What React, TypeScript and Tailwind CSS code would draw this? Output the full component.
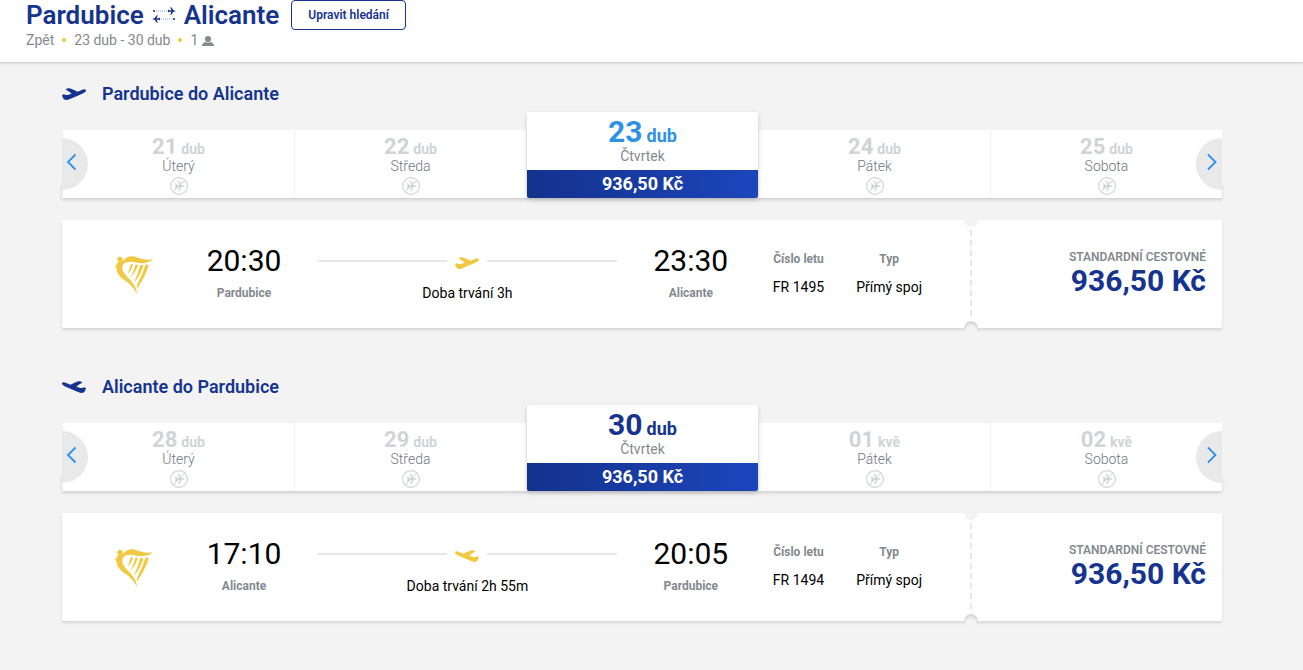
import React from 'react';

interface Day {
  day: string;
  month: string;
  weekday: string;
  price?: string;
}

interface Flight {
  title: string;
  returning?: boolean;
  days: Day[];
  from: string;
  to: string;
  departure: string;
  arrival: string;
  duration: string;
  number: string;
}

const flights: Flight[] = [
  {
    title: 'Pardubice do Alicante',
    days: [
      { day: '21', month: 'dub', weekday: 'Úterý' },
      { day: '22', month: 'dub', weekday: 'Středa' },
      { day: '23', month: 'dub', weekday: 'Čtvrtek', price: '936,50 Kč' },
      { day: '24', month: 'dub', weekday: 'Pátek' },
      { day: '25', month: 'dub', weekday: 'Sobota' },
    ],
    from: 'Pardubice',
    to: 'Alicante',
    departure: '20:30',
    arrival: '23:30',
    duration: '3h',
    number: 'FR 1495',
  },
  {
    title: 'Alicante do Pardubice',
    returning: true,
    days: [
      { day: '28', month: 'dub', weekday: 'Úterý' },
      { day: '29', month: 'dub', weekday: 'Středa' },
      { day: '30', month: 'dub', weekday: 'Čtvrtek', price: '936,50 Kč' },
      { day: '01', month: 'kvě', weekday: 'Pátek' },
      { day: '02', month: 'kvě', weekday: 'Sobota' },
    ],
    from: 'Alicante',
    to: 'Pardubice',
    departure: '17:10',
    arrival: '20:05',
    duration: '2h 55m',
    number: 'FR 1494',
  },
];

function PlaneIcon({ returning, className }: { returning?: boolean; className: string }) {
  return (
    <svg viewBox="0 0 72 36" className={`h-3 w-6 shrink-0 ${className}`} fill="currentColor" aria-hidden="true">
      <path
        transform={returning ? 'translate(72 0) scale(-1 1)' : undefined}
        d="M0 22 L5 19 Q11 22 17 21 L29 17 Q22 10 11 5 Q15 0 23 1 Q34 5 47 11 L59 6 Q68 2 72 6 Q74 11 64 16 Q42 26 22 34 Q12 38 5 33 Q2 29 0 22 Z"
      />
    </svg>
  );
}

function HarpLogo() {
  return (
    <svg viewBox="0 0 114 114" className="h-[38px] w-[38px] text-[#f1c941]" fill="currentColor" aria-hidden="true">
      <circle cx="15" cy="10" r="8" />
      <path d="M24 14 C35 3 46 -1 60 2 C76 6 89 14 114 10 C101 22 83 23 65 20 C46 15 29 17 23 28 C18 43 30 55 44 70 C56 84 65 97 66 114 C58 98 48 87 34 76 C15 64 4 51 5 38 L0 31 L5 26 L8 19 Z" />
      <path d="M47 26 Q52 21 54 26 Q50 42 38 55 Q43 41 47 26 Z" />
      <path d="M61 27 Q67 23 69 28 Q61 50 46 67 Q56 46 61 27 Z" />
      <path d="M76 28 Q82 24 85 29 Q76 58 57 81 Q68 54 76 28 Z" />
      <path d="M91 28 Q98 23 101 28 Q92 61 65 99 Q64 88 70 79 Q83 53 91 28 Z" />
    </svg>
  );
}

function NoFlightIcon() {
  return (
    <svg viewBox="0 0 18 18" className="mx-auto mt-[3px] block h-[18px] w-[18px] text-[#cfd3d6]" aria-hidden="true">
      <circle cx="9" cy="9" r="8.4" fill="none" stroke="currentColor" strokeWidth="1.1" />
      <path fill="currentColor" d="M5 6.5 L6 6.5 L7.4 8.2 L9.5 8.2 L8 4 L9.2 4 L11.6 8.2 L14 8.3 L14.8 9 L14 9.7 L11.6 9.8 L9.2 14 L8 14 L9.5 9.8 L7.4 9.8 L6 11.5 L5 11.5 L5.6 9 Z" />
      <path d="M3.2 14.8 L14.8 3.2" stroke="currentColor" strokeWidth="1" />
    </svg>
  );
}

function RouteIcon() {
  return (
    <svg viewBox="0 0 24 18" className="h-[18px] w-6 text-[#16348f]" fill="currentColor" aria-hidden="true">
      <rect x="1" y="4" width="2" height="2" opacity=".8" />
      <path d="M4 5 H17" stroke="currentColor" strokeWidth="1.2" strokeDasharray="1 1" opacity=".45" />
      <path d="M16 3.6 L17.2 4.2 H19.4 L18.2 1.2 H19.2 L21.6 4.2 L24 5 L21.6 5.8 L19.2 8.8 H18.2 L19.4 5.8 H17.2 L16 6.4 Z" />
      <rect x="21" y="12" width="2" height="2" opacity=".8" />
      <path d="M7 13 H20" stroke="currentColor" strokeWidth="1.2" strokeDasharray="1 1" opacity=".45" />
      <path d="M8 11.6 L6.8 12.2 H4.6 L5.8 9.2 H4.8 L2.4 12.2 L0 13 L2.4 13.8 L4.8 16.8 H5.8 L4.6 13.8 H6.8 L8 14.4 Z" />
    </svg>
  );
}

function ArrowButton({ next }: { next?: boolean }) {
  return (
    <button
      type="button"
      aria-label={next ? 'Další dny' : 'Předchozí dny'}
      className={`absolute bottom-2 flex h-[52px] w-[26px] items-center bg-[#e9e9e9] text-[#2e91e8] ${
        next ? 'right-0 justify-end rounded-l-full pr-1' : 'left-0 rounded-r-full pl-1'
      }`}
    >
      <svg viewBox="0 0 12 20" className="mb-1 h-5 w-3" fill="none" stroke="currentColor" strokeWidth="1.8" aria-hidden="true">
        <path d={next ? 'M2 2.5 L9.5 10 L2 17.5' : 'M9.5 2.5 L2 10 L9.5 17.5'} />
      </svg>
    </button>
  );
}

function DayTab({ item, returning }: { item: Day; returning?: boolean }) {
  if (item.price) {
    return (
      <button type="button" className="relative ml-px flex-1 overflow-hidden rounded-xs bg-white pt-1 text-center shadow-[0_2px_5px_rgba(0,0,0,0.15)]">
        <span className={`flex h-8 items-baseline justify-center gap-1 font-bold ${returning ? 'text-[#16348f]' : 'text-[#2e91e8]'}`}>
          <span className="text-3xl leading-8">{item.day}</span>
          <span className="text-lg leading-none">{item.month}</span>
        </span>
        <span className="block text-sm leading-4 text-[#84898f]">{item.weekday}</span>
        <span className="mt-1.5 block bg-linear-to-r from-[#14318c] to-[#1c46bd] text-lg font-bold leading-7 text-white">{item.price}</span>
      </button>
    );
  }

  return (
    <button type="button" className="flex-1 border-l border-[#f1f1f1] bg-white pt-1.5 pb-[3px] text-center">
      <span className="flex h-[22px] items-baseline justify-center gap-1 font-bold text-[#d0d4d7]">
        <span className="text-[22px] leading-[22px]">{item.day}</span>
        <span className="text-sm leading-none">{item.month}</span>
      </span>
      <span className="block text-sm font-light leading-4 text-[#6f777f]">{item.weekday}</span>
      <NoFlightIcon />
    </button>
  );
}

function TimePoint({ time, city }: { time: string; city: string }) {
  return (
    <div className="w-[76px] shrink-0 text-center">
      <div className="text-3xl leading-9 text-black">{time}</div>
      <div className="mt-1 text-xs font-bold leading-5 text-[#84898f]">{city}</div>
    </div>
  );
}

function Detail({ label, value }: { label: string; value: string }) {
  return (
    <div className="shrink-0 text-center">
      <div className="text-xs font-bold leading-5 text-[#84898f]">{label}</div>
      <div className="mt-2 text-sm leading-5 text-black">{value}</div>
    </div>
  );
}

function Ticket({ flight }: { flight: Flight }) {
  return (
    <div className="mt-[22px] flex h-[108px] rounded-xs bg-white shadow-[0_2px_3px_rgba(0,0,0,0.12)]">
      <div className="flex flex-1 items-center pr-[42px] pb-0.5">
        <div className="flex w-36 shrink-0 justify-center pt-1">
          <HarpLogo />
        </div>
        <TimePoint time={flight.departure} city={flight.from} />
        <div className="mx-9 flex-1 text-center">
          <div className="flex h-9 items-center gap-2">
            <span className="h-0.5 flex-1 bg-[#e7e7e7]" />
            <PlaneIcon returning={flight.returning} className="mt-1 text-[#f1c941]" />
            <span className="h-0.5 flex-1 bg-[#e7e7e7]" />
          </div>
          <div className="mt-1 text-sm leading-5 text-black">Doba trvání {flight.duration}</div>
        </div>
        <TimePoint time={flight.arrival} city={flight.to} />
        <div className="ml-11 flex gap-8">
          <Detail label="Číslo letu" value={flight.number} />
          <Detail label="Typ" value="Přímý spoj" />
        </div>
      </div>
      <div className="relative -mb-1 flex w-3.5 justify-center overflow-hidden pt-2.5 pb-3.5">
        <span className="absolute -top-[7px] h-3.5 w-3.5 rounded-full bg-[#f3f3f3]" />
        <span className="w-0.5 bg-[repeating-linear-gradient(to_bottom,#e7e7e7_0px,#e7e7e7_6px,transparent_6px,transparent_10px)]" />
        <span className="absolute -bottom-[3px] h-3.5 w-3.5 rounded-full bg-[#f3f3f3] shadow-[inset_0_3px_3px_rgba(0,0,0,0.12)]" />
      </div>
      <div className="flex w-[244px] flex-col justify-center pr-4 pb-0.5 text-right">
        <div className="text-xs font-semibold leading-4 text-[#84898f]">STANDARDNÍ CESTOVNÉ</div>
        <div className="text-3xl font-bold leading-8 text-[#16348f]">936,50 Kč</div>
      </div>
    </div>
  );
}

export default function App() {
  return (
    <div className="min-h-screen bg-[#f3f3f3] font-['Roboto',sans-serif]">
      <header className="bg-white px-[26px] pb-3 shadow-[0_1px_3px_rgba(0,0,0,0.2)]">
        <div className="flex h-[30px] items-center">
          <h1 className="flex items-center gap-2 text-[26px] font-semibold leading-[30px] text-[#16348f]">
            Pardubice <RouteIcon /> Alicante
          </h1>
          <button type="button" className="ml-3 h-[30px] rounded-sm border border-[#16348f] px-4 text-xs font-semibold text-[#16348f]">
            Upravit hledání
          </button>
        </div>
        <div className="flex h-5 items-center text-sm text-[#84898f]">
          <a href="#">Zpět</a>
          <span className="mx-2 h-1 w-1 rounded-full bg-[#f1c941]" />
          <span>23 dub - 30 dub</span>
          <span className="mx-2 h-1 w-1 rounded-full bg-[#f1c941]" />
          <span>1</span>
          <svg viewBox="0 0 12 10" className="mt-0.5 ml-1 h-2.5 w-3" fill="currentColor" aria-hidden="true">
            <circle cx="6" cy="3" r="3" />
            <path d="M0 10 Q0 6.8 4 6 Q6 7.4 8 6 Q12 6.8 12 10 Z" />
          </svg>
        </div>
      </header>

      <main className="pr-[19px] pt-5 pb-10">
        <div className="mx-auto flex max-w-[1160px] flex-col gap-[47px]">
          {flights.map((flight) => (
            <section key={flight.number}>
              <h2 className="mb-1.5 flex items-center gap-4 text-lg font-semibold leading-6 text-[#16348f]">
                <PlaneIcon returning={flight.returning} className="text-[#16348f]" />
                {flight.title}
              </h2>
              <div className="relative flex items-end">
                <div className="absolute inset-x-0 bottom-0 h-4 shadow-[0_2px_3px_rgba(0,0,0,0.15)]" />
                {flight.days.map((item) => (
                  <DayTab key={item.day} item={item} returning={flight.returning} />
                ))}
                <ArrowButton />
                <ArrowButton next />
              </div>
              <Ticket flight={flight} />
            </section>
          ))}
        </div>
      </main>
    </div>
  );
}
